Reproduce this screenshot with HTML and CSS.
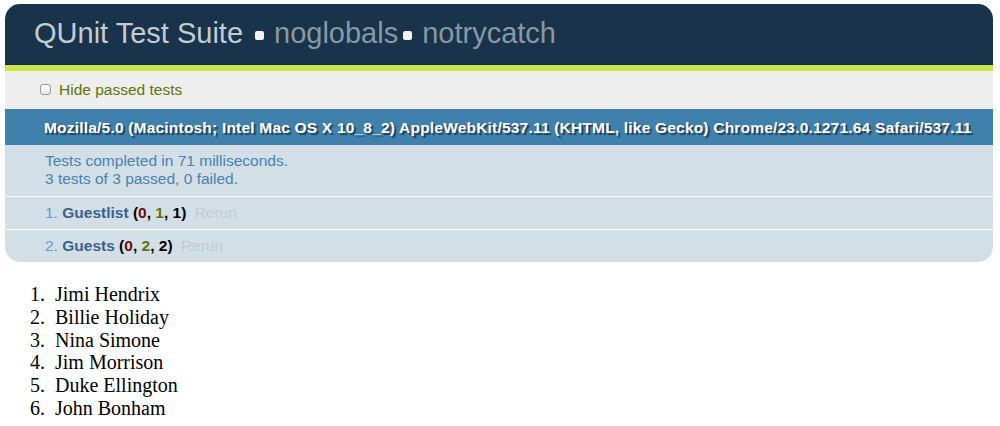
FILE: index.html
```html
<!DOCTYPE html>
<html lang="en">
<head>
<meta charset="utf-8">
<title>QUnit Test Suite</title>
<link rel="stylesheet" href="styles.css">
</head>
<body>
<div class="qunit">
  <h1 class="q-header"><a class="q-title" href="#">QUnit Test Suite</a><label class="q-opt q-opt-first"><span class="q-box"></span>noglobals</label><label class="q-opt"><span class="q-box"></span>notrycatch</label></h1>
  <div class="q-banner"></div>
  <div class="q-toolbar"><label class="q-hide"><input type="checkbox" class="q-check">Hide passed tests</label></div>
  <div class="q-ua">Mozilla/5.0 (Macintosh; Intel Mac OS X 10_8_2) AppleWebKit/537.11 (KHTML, like Gecko) Chrome/23.0.1271.64 Safari/537.11</div>
  <p class="q-result">Tests completed in 71 milliseconds.<br>3 tests of 3 passed, 0 failed.</p>
  <ol class="q-tests">
    <li class="q-test"><strong><span class="test-name">Guestlist</span> <b class="counts">(<b class="failed">0</b>, <b class="passed">1</b>, 1)</b></strong> <a class="rerun" href="#">Rerun</a></li>
    <li class="q-test"><strong><span class="test-name">Guests</span> <b class="counts">(<b class="failed">0</b>, <b class="passed">2</b>, 2)</b></strong> <a class="rerun" href="#">Rerun</a></li>
  </ol>
</div>
<ol class="guests">
  <li>Jimi Hendrix</li>
  <li>Billie Holiday</li>
  <li>Nina Simone</li>
  <li>Jim Morrison</li>
  <li>Duke Ellington</li>
  <li>John Bonham</li>
</ol>
</body>
</html>
```

FILE: styles.css
```css
html, body {
  margin: 0;
  padding: 0;
  background: #fff;
}

body {
  padding: 4px 7px 0 5px;
  font-family: "Liberation Serif", "Times New Roman", serif;
}

.qunit {
  border-radius: 15px;
  overflow: hidden;
  font-family: "Liberation Sans", Helvetica, Arial, sans-serif;
}

.q-header {
  margin: 0;
  padding: 15px 0 16px 29px;
  background: #19334a;
  border-bottom: 1px solid #10283c;
  color: #8699a4;
  font-size: 29px;
  line-height: 29px;
  font-weight: normal;
  white-space: nowrap;
}

.q-title {
  color: #c2ccd1;
  text-decoration: none;
}

.q-opt {
  margin-left: 5px;
}

.q-opt-first {
  margin-left: 12px;
}

.q-box {
  display: inline-block;
  width: 9px;
  height: 9px;
  margin: 0 10px 3px 0;
  background: #f2f2f2;
  border-radius: 2px;
  vertical-align: baseline;
}

.q-banner {
  height: 6px;
  background: #cce445;
}

.q-toolbar {
  padding: 9px 0 10px 31px;
  background: #eeeeee;
  color: #5e740b;
  font-size: 15.5px;
  line-height: 19px;
}

.q-hide {
  display: inline-flex;
  align-items: center;
}

.q-check {
  appearance: none;
  -webkit-appearance: none;
  width: 11px;
  height: 11px;
  margin: 0 8px 0 4px;
  border: 1px solid #9a9a9a;
  border-radius: 3px;
  background: linear-gradient(#ffffff, #e6e6e6);
}

.q-ua {
  padding: 8.5px 0 8.5px 39px;
  background: #4080ad;
  color: #fff;
  font-size: 15.5px;
  line-height: 19px;
  font-weight: bold;
  letter-spacing: 0.2px;
  white-space: nowrap;
  text-shadow: rgba(0, 0, 0, 0.5) 2px 2px 1px;
}

.q-result {
  margin: 0;
  padding: 7px 8px 8px 40px;
  background: #d3dfe6;
  color: #4783b3;
  border-bottom: 1px solid #fff;
  font-size: 15.5px;
  line-height: 18px;
}

.q-tests {
  margin: 0;
  padding: 0;
  list-style-position: inside;
}

.q-test {
  padding: 6px 8px 7px 40px;
  background: #d3dfe6;
  color: #6a95d8;
  border-bottom: 1px solid #fff;
  font-size: 15.5px;
  line-height: 19px;
}

.q-test:last-child {
  border-bottom: 0;
}

.test-name {
  color: #3a5f92;
}

.counts {
  color: #000;
}

.failed {
  color: #710909;
}

.passed {
  color: #5e740b;
}

.rerun {
  padding: 0 4px;
  color: #c2ccd1;
  text-decoration: none;
}

.guests {
  margin: 21px 0 0;
  padding-left: 50px;
  font-size: 20px;
  line-height: 22.8px;
  color: #000;
}

.guests li::marker {
  content: counter(list-item) ".\2002";
}
```
